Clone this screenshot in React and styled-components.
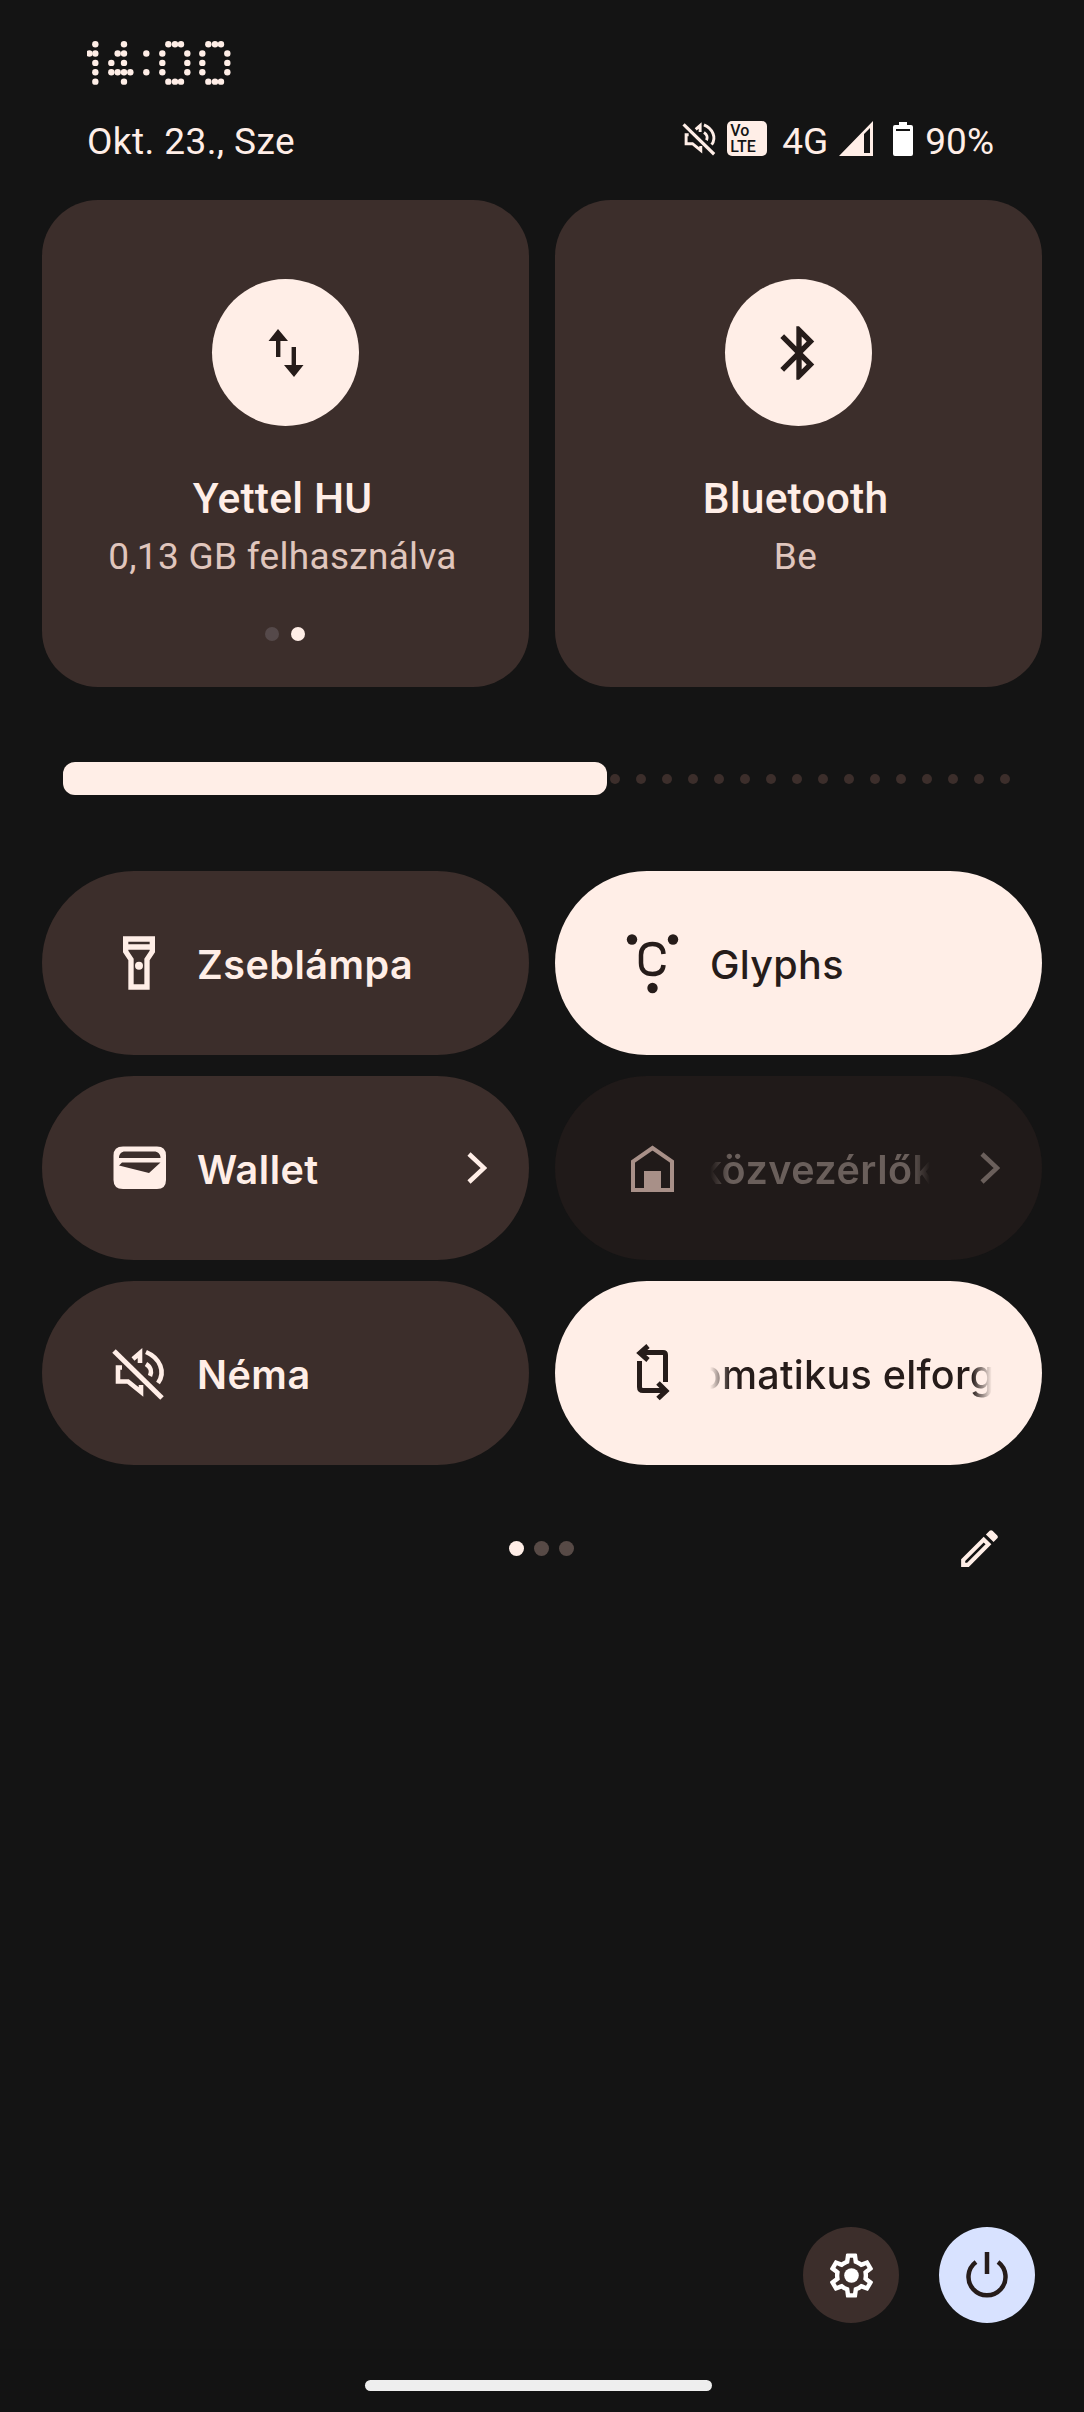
import React from "react";
import styled, { createGlobalStyle } from "styled-components";

const cream = "#ffeee7";
const tile = "#3c2e2b";
const ink = "#261c1a";

const Global = createGlobalStyle`
  html, body { margin: 0; padding: 0; background: #141414; }
  #root { width: 1084px; height: 2412px; }
  * { box-sizing: border-box; }
`;

const Page = styled.div`
  width: 1084px;
  height: 2412px;
  background: #141414;
  display: flex;
  flex-direction: column;
  overflow: hidden;
  color: ${cream};
  font-family: Roboto, "Noto Sans", sans-serif;
`;
const ClockWrap = styled.div`
  padding: 40px 0 0 87px;
  height: 121px;
`;
const StatusRow = styled.div`
  display: flex;
  justify-content: space-between;
  align-items: center;
  height: 35px;
  padding: 0 90px 0 87px;
`;
const DateText = styled.span`
  font-size: 37px;
  line-height: 35px;
  padding-top: 5px;
  letter-spacing: 0.4px;
`;
const StatusIcons = styled.div`
  display: flex;
  align-items: center;
  svg { flex: none; display: block; }
`;
const StatusText = styled.span`
  margin-left: ${(p) => p.$ml}px;
  font-size: 37px;
  line-height: 35px;
  padding-top: 5px;
`;
const StatusGlyph = styled.span`
  margin-left: ${(p) => p.$ml}px;
  display: block;
`;
const VolteBadge = styled.span`
  width: 40px;
  height: 35px;
  margin-left: 2px;
  border-radius: 5px;
  background: ${cream};
  color: #141414;
  font-size: 16px;
  line-height: 16px;
  font-weight: 500;
  display: flex;
  flex-direction: column;
  justify-content: center;
  padding-left: 3px;
`;
const Cards = styled.div`
  margin-top: 44px;
  padding: 0 42px;
  display: grid;
  grid-template-columns: 487px 487px;
  gap: 26px;
`;
const Card = styled.div`
  height: 487px;
  border-radius: 56px;
  background: ${tile};
  padding-top: 79px;
  display: flex;
  flex-direction: column;
  align-items: center;
`;
const CardCircle = styled.div`
  width: 147px;
  height: 147px;
  border-radius: 50%;
  background: ${cream};
  display: flex;
  align-items: center;
  justify-content: center;
`;
const CardText = styled.div`
  margin-top: 46px;
  padding-right: 6px;
  display: flex;
  flex-direction: column;
  align-items: center;
`;
const CardTitle = styled.div`
  font-size: 42.5px;
  line-height: 54px;
  font-weight: 500;
  letter-spacing: 0.2px;
`;
const CardSub = styled.div`
  margin-top: 4px;
  font-size: 37px;
  line-height: 54px;
  color: #e0c6bd;
  letter-spacing: 0.3px;
`;
const CardDots = styled.div`
  margin-top: 43px;
  padding-left: 5px;
  display: flex;
  gap: 12px;
`;
const Dot = styled.span`
  width: ${(p) => p.$size}px;
  height: ${(p) => p.$size}px;
  border-radius: 50%;
  background: ${(p) => p.$color};
  flex: none;
`;
const SliderRow = styled.div`
  margin-top: 75px;
  padding-left: 63px;
  height: 33px;
  display: flex;
  align-items: center;
`;
const SliderFill = styled.div`
  width: 544px;
  height: 33px;
  border-radius: 12px;
  background: ${cream};
`;
const SliderDots = styled.div`
  display: flex;
  gap: 16px;
  margin-left: 3px;
`;
const Pills = styled.div`
  margin-top: 76px;
  padding: 0 42px;
  display: grid;
  grid-template-columns: 487px 487px;
  grid-auto-rows: 184px;
  column-gap: 26px;
  row-gap: 21px;
`;
const pillBg = { off: tile, on: cream, disabled: "#201a19" };
const pillFg = { off: cream, on: ink, disabled: "#6a5f5b" };
const Pill = styled.div`
  border-radius: 92px;
  background: ${(p) => pillBg[p.$state]};
  color: ${(p) => pillFg[p.$state]};
  display: flex;
  align-items: center;
  padding: 0 42px 0 65px;
`;
const PillIcon = styled.div`
  width: 64px;
  height: 64px;
  flex: none;
  display: flex;
  align-items: center;
  justify-content: center;
  svg { flex: none; }
`;
const LabelClip = styled.div`
  margin-left: 26px;
  margin-right: ${(p) => p.$endGap || 0}px;
  padding-top: 3px;
  flex: 1;
  min-width: 0;
  overflow: hidden;
  white-space: nowrap;
  font-family: Inter, Roboto, sans-serif;
  font-size: 39.5px;
  line-height: 54px;
  font-weight: ${(p) => (p.$state === "on" ? 500 : 600)};
  letter-spacing: ${(p) => (p.$state === "on" ? 0.3 : 0.5)}px;
  ${(p) =>
    p.$fade &&
    `-webkit-mask-image: linear-gradient(to right, transparent 0, #000 20px, #000 calc(100% - 20px), transparent 100%);
     mask-image: linear-gradient(to right, transparent 0, #000 20px, #000 calc(100% - 20px), transparent 100%);`}
`;
const LabelText = styled.span`
  display: inline-block;
  transform: translateX(${(p) => p.$shift || 0}px);
`;
const Chevron = styled.svg`
  flex: none;
  margin-left: 50px;
`;
const Footer = styled.div`
  margin-top: 59px;
  height: 49px;
  display: grid;
  grid-template-columns: 1fr auto 1fr;
  align-items: center;
`;
const PageDots = styled.div`
  display: flex;
  gap: 10px;
  grid-column: 2;
  margin-left: -1px;
`;
const EditBtn = styled.div`
  grid-column: 3;
  justify-self: end;
  padding-right: 80px;
  height: 49px;
`;
const Bottom = styled.div`
  margin-top: auto;
`;
const Buttons = styled.div`
  display: flex;
  justify-content: flex-end;
  gap: 40px;
  padding-right: 49px;
  margin-bottom: 26px;
`;
const RoundBtn = styled.div`
  width: 96px;
  height: 96px;
  border-radius: 50%;
  background: ${(p) => p.$bg};
  display: flex;
  align-items: center;
  justify-content: center;
`;
const NavArea = styled.div`
  height: 63px;
  background: #131313;
  padding: 31px 0 0 365px;
`;
const Handle = styled.div`
  width: 347px;
  height: 11px;
  border-radius: 6px;
  background: #eeeeee;
`;

const clockDots = [
  [76, 162, 295, 315, 333, 415, 435, 453],
  [58, 76, 143, 162, 229, 277, 352, 397, 472],
  [76, 124, 162, 277, 352, 397, 472],
  [76, 124, 143, 162, 181, 229, 277, 352, 397, 472],
  [76, 162, 295, 315, 333, 415, 435, 453],
];

const Clock = () => (
  <svg width="170" height="46" viewBox="87 40 170 46" aria-label="14:00" role="img">
    <title>14:00</title>
    {clockDots.map((row, r) =>
      row.map((x) => (
        <circle key={`${r}-${x}`} cx={70 + x / 3} cy={44.2 + r * 9.36} r="3.2" fill={cream} />
      ))
    )}
  </svg>
);

const MuteIcon = ({ size, color }) => (
  <svg width={size} height={(size * 70) / 80} viewBox="-1 -2 80 70" fill="none" stroke={color} strokeWidth="4.6">
    <path d="M14 11 L62 58" strokeWidth="5" />
    <path d="M22 27.5 H18 V41.5 H28 L41 52 V45" />
    <path d="M40 23 V13 L33 19" />
    <path d="M46 12 C60 18 66 32 58 43" />
    <path d="M46 24 C51 27 52 32 50 36" />
  </svg>
);

const SignalIcon = () => (
  <svg width="34" height="35" viewBox="0 0 34 35">
    <path fillRule="evenodd" d="M34 0 V35 H0 Z M31 7 L25 13 V32 H31 Z" fill={cream} />
  </svg>
);

const BatteryIcon = () => (
  <svg width="20" height="34" viewBox="0 0 20 34">
    <path fillRule="evenodd" d="M6 0 H14 V3 H18 Q20 3 20 5 V32 Q20 34 18 34 H2 Q0 34 0 32 V5 Q0 3 2 3 H6 Z M3 7 V9 H17 V7 Z" fill="#fff" />
  </svg>
);

const DataIcon = () => (
  <svg width="36" height="48" viewBox="0 0 36 48" fill={ink}>
    <path d="M10 0 L20 12 H12.4 V28 H8 V12 H0.5 Z" />
    <path d="M26 48 L16 36 H23.6 V18 H28 V36 H35.5 Z" />
  </svg>
);

const BluetoothIcon = () => (
  <svg width="64" height="64" viewBox="0 0 24 24" fill={ink}>
    <path d="M17.71 7.71L12 2h-1v7.59L6.41 5 5 6.41 10.59 12 5 17.59 6.41 19 11 14.41V22h1l5.71-5.71-4.3-4.29 4.3-4.29zM13 5.83l1.88 1.88L13 9.59V5.83zm1.88 10.46L13 18.17v-3.76l1.88 1.88z" />
  </svg>
);

const FlashIcon = () => (
  <svg width="64" height="64" viewBox="0 0 24 24" fill={cream}>
    <path d="M18 2H6v6l2 3v11h8V11l2-3V2zm-2 2v1H8V4h8zm-2 6.4V20h-4v-9.6L8 7.4V7h8v.4l-2 3z" />
    <circle cx="12" cy="13" r="1.5" />
  </svg>
);

const WalletIcon = () => (
  <svg width="80" height="70" viewBox="-1 3 80 70">
    <path
      fillRule="evenodd"
      fill={cream}
      d="M23 16.5 H57 Q66 16.5 66 25.5 V50 Q66 59 57 59 H23 Q13.5 59 13.5 50 V25.5 Q13.5 16.5 23 16.5 Z
         M19 28 H60.5 C60.5 24 58 21.5 54 21.5 H25 C21.5 21.5 19 24 19 28 Z
         M22 32.5 L19 35.5 L49 43 L60.5 32.5 Z"
    />
  </svg>
);

const GlyphsIcon = () => (
  <svg width="80" height="70" viewBox="-3 3 80 70" fill={ink}>
    <circle cx="17" cy="14.5" r="5.2" />
    <circle cx="58" cy="14.5" r="5.2" />
    <circle cx="37.5" cy="63" r="5.2" />
    <path
      d="M48.5 29 C48 22 44 19 37.5 19 C29.5 19 26 23.5 26 30 V38 C26 45 30 49 37.5 49 C44 49 48 46 48.5 40"
      fill="none"
      stroke={ink}
      strokeWidth="4.5"
    />
  </svg>
);

const HomeIcon = () => (
  <svg width="43" height="47" viewBox="0 0 43 47" fill="none">
    <path d="M2 45 V16.5 L21.5 3 L41 16.5 V45 Z" stroke="#a89088" strokeWidth="4" />
    <rect x="13" y="26" width="17" height="20" fill="#a89088" />
  </svg>
);

const RotateIcon = () => (
  <svg width="80" height="70" viewBox="-3 -2 80 70" fill="none" stroke={ink} strokeWidth="5">
    <path d="M26 12.5 H48 Q50.5 12.5 50.5 15 V42" />
    <path d="M24.5 21 V47 Q24.5 50.5 28 50.5 H50" />
    <path d="M33 6 L25 13 L33 20" />
    <path d="M43 43 L51 51 L43 58.5" />
  </svg>
);

const ChevronIcon = ({ color }) => (
  <Chevron width="20" height="32" viewBox="0 0 20 32" fill="none" stroke={color} strokeWidth="4.6">
    <path d="M2 2 L17 16 L2 30" />
  </Chevron>
);

const PencilIcon = () => (
  <svg width="49" height="49" viewBox="0 0 24 24" fill={cream}>
    <path d="M14.06 9.02l.92.92L5.92 19H5v-.92l9.06-9.06M17.66 3c-.25 0-.51.1-.7.29l-1.83 1.83 3.75 3.75 1.83-1.83c.39-.39.39-1.02 0-1.41l-2.34-2.34c-.2-.2-.45-.29-.71-.29zm-3.6 3.19L3 17.25V21h3.75L17.81 9.94l-3.75-3.75z" />
  </svg>
);

const GearIcon = () => (
  <svg width="53" height="53" viewBox="0 0 24 24" fill="#fff">
    <path d="M19.43 12.98c.04-.32.07-.64.07-.98 0-.34-.03-.66-.07-.98l2.11-1.65c.19-.15.24-.42.12-.64l-2-3.46c-.09-.16-.26-.25-.44-.25-.06 0-.12.01-.17.03l-2.49 1c-.52-.4-1.08-.73-1.69-.98l-.38-2.65C14.46 2.18 14.25 2 14 2h-4c-.25 0-.46.18-.49.42l-.38 2.65c-.61.25-1.17.59-1.69.98l-2.49-1c-.06-.02-.12-.03-.18-.03-.17 0-.34.09-.43.25l-2 3.46c-.13.22-.07.49.12.64l2.11 1.65c-.04.32-.07.65-.07.98 0 .33.03.66.07.98l-2.11 1.65c-.19.15-.24.42-.12.64l2 3.46c.09.16.26.25.44.25.06 0 .12-.01.17-.03l2.49-1c.52.4 1.08.73 1.69.98l.38 2.65c.03.24.24.42.49.42h4c.25 0 .46-.18.49-.42l.38-2.65c.61-.25 1.17-.59 1.69-.98l2.49 1c.06.02.12.03.18.03.17 0 .34-.09.43-.25l2-3.46c.12-.22.07-.49-.12-.64l-2.11-1.65zm-1.98-1.71c.04.31.05.52.05.73 0 .21-.02.43-.05.73l-.14 1.13.89.7 1.08.84-.7 1.21-1.27-.51-1.04-.42-.9.68c-.43.32-.84.56-1.25.73l-1.06.43-.16 1.13-.2 1.35h-1.4l-.19-1.35-.16-1.13-1.06-.43c-.43-.18-.83-.41-1.23-.71l-.91-.7-1.06.43-1.27.51-.7-1.21 1.08-.84.89-.7-.14-1.13c-.03-.31-.05-.54-.05-.74s.02-.43.05-.73l.14-1.13-.89-.7-1.08-.84.7-1.21 1.27.51 1.04.42.9-.68c.43-.32.84-.56 1.25-.73l1.06-.43.16-1.13.2-1.35h1.39l.19 1.35.16 1.13 1.06.43c.43.18.83.41 1.23.71l.91.7 1.06-.43 1.27-.51.7 1.21-1.07.85-.89.7.14 1.13z" />
    <circle cx="12" cy="12" r="3.3" />
  </svg>
);

const PowerIcon = () => (
  <svg width="96" height="96" viewBox="0 0 96 96" fill="none" stroke={ink} strokeWidth="4.5">
    <path d="M48 25 V47" />
    <path d="M37 35 A18.5 18.5 0 1 0 59 35" />
  </svg>
);

const tiles = [
  { state: "off", icon: <FlashIcon />, label: "Zseblámpa" },
  { state: "on", icon: <GlyphsIcon />, label: "Glyphs" },
  { state: "off", icon: <WalletIcon />, label: "Wallet", chevron: cream },
  { state: "disabled", icon: <HomeIcon />, label: "Eszközvezérlők", chevron: "#6a5f5b", fade: true, shift: -80 },
  { state: "off", icon: <MuteIcon size={80} color={cream} />, label: "Néma" },
  { state: "on", icon: <RotateIcon />, label: "Automatikus elforgatás", fade: true, shift: -78, endGap: 8 },
];

const sliderDots = Array.from({ length: 16 }, (_, i) => i);

export default function App() {
  return (
    <Page>
      <Global />
      <ClockWrap>
        <Clock />
      </ClockWrap>
      <StatusRow>
        <DateText>Okt. 23., Sze</DateText>
        <StatusIcons>
          <MuteIcon size={51} color={cream} />
          <VolteBadge>
            <span>Vo</span>
            <span>LTE</span>
          </VolteBadge>
          <StatusText $ml={15}>4G</StatusText>
          <StatusGlyph $ml={11}><SignalIcon /></StatusGlyph>
          <StatusGlyph $ml={20}><BatteryIcon /></StatusGlyph>
          <StatusText $ml={12}>90%</StatusText>
        </StatusIcons>
      </StatusRow>
      <Cards>
        <Card>
          <CardCircle><DataIcon /></CardCircle>
          <CardText>
            <CardTitle>Yettel HU</CardTitle>
            <CardSub>0,13 GB felhasználva</CardSub>
            <CardDots>
              <Dot $size={14} $color="#55494a" />
              <Dot $size={14} $color={cream} />
            </CardDots>
          </CardText>
        </Card>
        <Card>
          <CardCircle><BluetoothIcon /></CardCircle>
          <CardText>
            <CardTitle>Bluetooth</CardTitle>
            <CardSub>Be</CardSub>
          </CardText>
        </Card>
      </Cards>
      <SliderRow>
        <SliderFill />
        <SliderDots>
          {sliderDots.map((i) => (
            <Dot key={i} $size={10} $color={tile} />
          ))}
        </SliderDots>
      </SliderRow>
      <Pills>
        {tiles.map((t) => (
          <Pill key={t.label} $state={t.state}>
            <PillIcon>{t.icon}</PillIcon>
            <LabelClip $fade={t.fade} $state={t.state} $endGap={t.endGap}>
              <LabelText $shift={t.shift}>{t.label}</LabelText>
            </LabelClip>
            {t.chevron && <ChevronIcon color={t.chevron} />}
          </Pill>
        ))}
      </Pills>
      <Footer>
        <PageDots>
          <Dot $size={15} $color={cream} />
          <Dot $size={15} $color="#574a46" />
          <Dot $size={15} $color="#574a46" />
        </PageDots>
        <EditBtn><PencilIcon /></EditBtn>
      </Footer>
      <Bottom>
        <Buttons>
          <RoundBtn $bg={tile}><GearIcon /></RoundBtn>
          <RoundBtn $bg="#d8e2ff"><PowerIcon /></RoundBtn>
        </Buttons>
        <NavArea><Handle /></NavArea>
      </Bottom>
    </Page>
  );
}
